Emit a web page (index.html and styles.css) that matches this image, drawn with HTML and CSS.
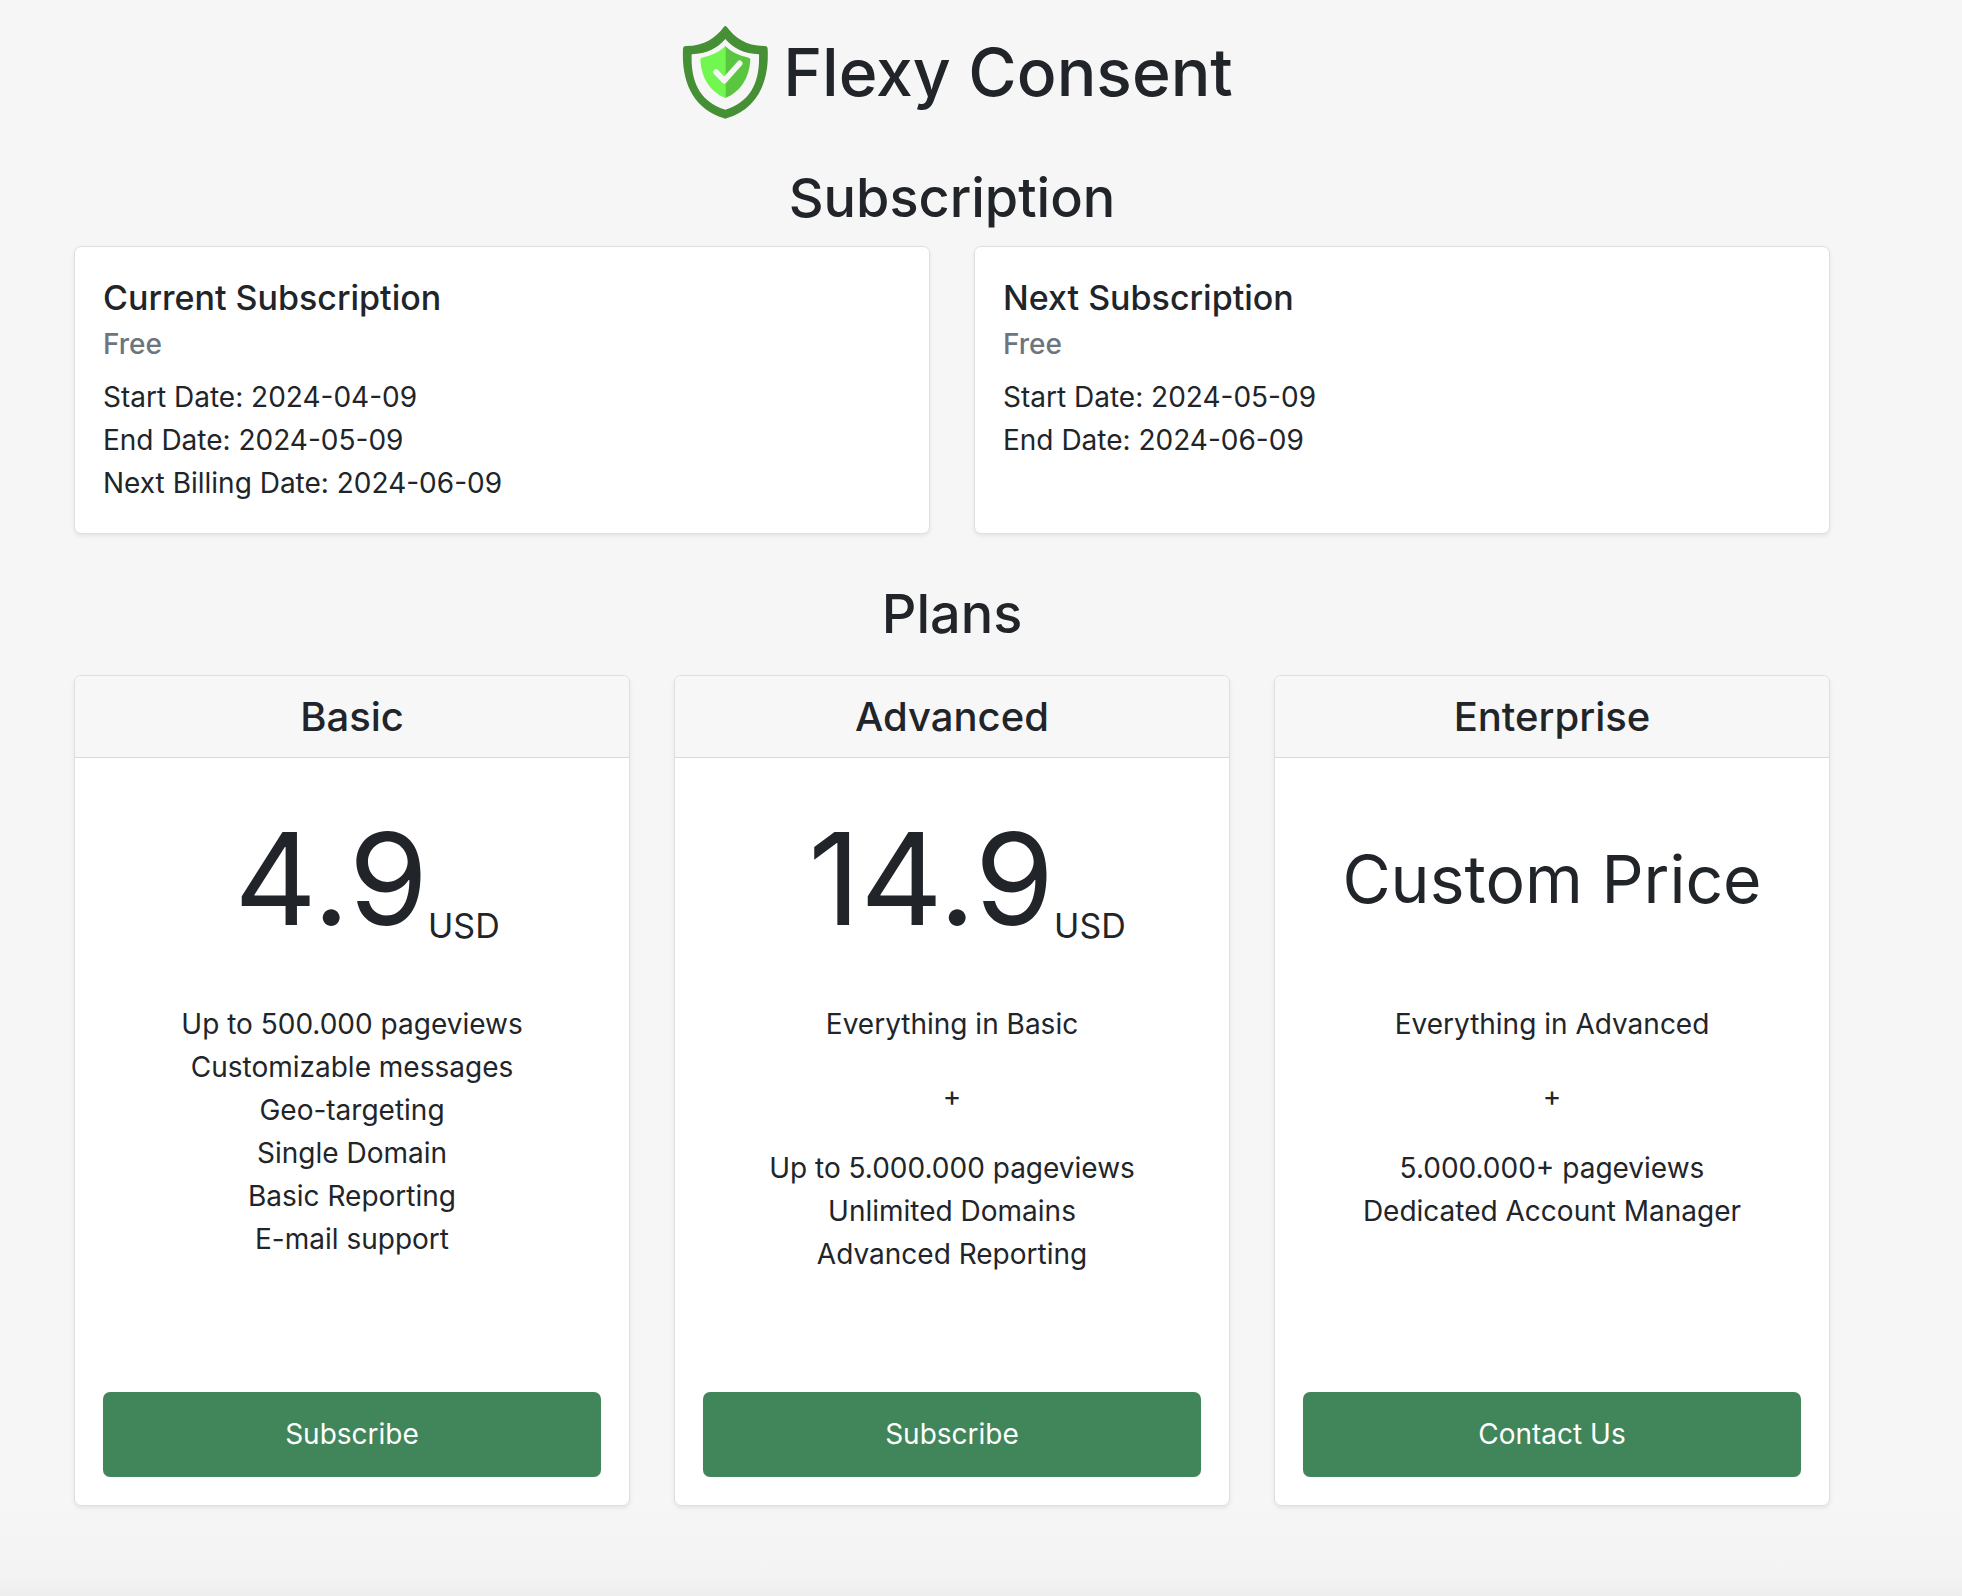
FILE: index.html
```html
<!DOCTYPE html>
<html lang="en">
<head>
  <meta charset="UTF-8" />
  <meta name="viewport" content="width=device-width, initial-scale=1.0"/>
  <title>Flexy Consent - Subscription</title>
  <link rel="stylesheet" href="styles.css">
</head>
<body>
  <main class="container">
    <header class="brand">
      <svg class="logo" viewBox="3 33 294 279" aria-hidden="true">
        <path fill="#459035" fill-rule="evenodd" d="M162 35Q166 31 170 35C194 67 228 93 284 93Q293 93 293 102C298 203 262 281 170 310Q166 312 162 310C70 281 34 203 39 102Q39 93 48 93C104 93 138 67 162 35ZM166 72C142 100 110 116 65 118C62 205 92 260 166 284C240 260 270 205 267 118C222 116 190 100 166 72Z"/>
        <path fill="#71f750" d="M166 93C148 112 122 122 96 128Q91 129 91 135C94 190 121 231 166 249Z"/>
        <path fill="#5ac53f" d="M166 93C184 112 210 122 236 128Q241 129 241 135C238 190 211 231 166 249Z"/>
        <path fill="none" stroke="#f6f6f6" stroke-width="17" stroke-linecap="round" stroke-linejoin="round" d="M138 171L163 197L209 145"/>
      </svg>
      <h1>Flexy Consent</h1>
    </header>

    <h2>Subscription</h2>
    <section class="subscriptions">
      <div class="card card-body">
        <h5>Current Subscription</h5>
        <h6>Free</h6>
        <p>Start Date: 2024-04-09<br>End Date: 2024-05-09<br>Next Billing Date: 2024-06-09</p>
      </div>
      <div class="card card-body">
        <h5>Next Subscription</h5>
        <h6>Free</h6>
        <p>Start Date: 2024-05-09<br>End Date: 2024-06-09</p>
      </div>
    </section>

    <h2 class="plans-title">Plans</h2>
    <section class="plans">
      <div class="card">
        <h4 class="card-header">Basic</h4>
        <div class="card-body">
          <div class="price">4.9<small>USD</small></div>
          <ul class="features">
            <li>Up to 500.000 pageviews</li>
            <li>Customizable messages</li>
            <li>Geo-targeting</li>
            <li>Single Domain</li>
            <li>Basic Reporting</li>
            <li>E-mail support</li>
          </ul>
          <button type="button" class="btn">Subscribe</button>
        </div>
      </div>
      <div class="card">
        <h4 class="card-header">Advanced</h4>
        <div class="card-body">
          <div class="price">14.9<small>USD</small></div>
          <ul class="features">
            <li>Everything in Basic</li>
            <li class="plus">+</li>
            <li>Up to 5.000.000 pageviews</li>
            <li>Unlimited Domains</li>
            <li>Advanced Reporting</li>
          </ul>
          <button type="button" class="btn">Subscribe</button>
        </div>
      </div>
      <div class="card">
        <h4 class="card-header">Enterprise</h4>
        <div class="card-body">
          <div class="price price-custom">Custom Price</div>
          <ul class="features">
            <li>Everything in Advanced</li>
            <li class="plus">+</li>
            <li>5.000.000+ pageviews</li>
            <li>Dedicated Account Manager</li>
          </ul>
          <button type="button" class="btn">Contact Us</button>
        </div>
      </div>
    </section>
  </main>
  <div class="page-end"></div>
</body>
</html>
```

FILE: styles.css
```css
* {
  box-sizing: border-box;
}

body {
  margin: 0;
  font-family: Inter, "Liberation Sans", sans-serif;
  font-size: 28px;
  line-height: 43px;
  color: #212529;
  background: #f6f6f6;
}

h1, h2, h4, h5, h6, p, ul {
  margin: 0;
  font-weight: 500;
}

.container {
  padding: 26px 132px 0 74px;
}

/* Logo and name */
.brand {
  display: flex;
  align-items: center;
  justify-content: center;
  gap: 14px;
  margin-bottom: 44px;
}

.logo {
  width: 98px;
  height: 93px;
}

h1 {
  font-size: 66px;
  line-height: 86px;
  padding-bottom: 2px;
}

h2 {
  font-size: 54px;
  line-height: 69px;
  text-align: center;
  margin-bottom: 14px;
}

.plans-title {
  margin: 45px 0 27px;
}

.card {
  background: #fff;
  border: 1px solid #dfdfdf;
  border-radius: 7px;
  box-shadow: 0 2px 4px rgba(0, 0, 0, 0.075);
}

.card-body {
  padding: 28px;
}

/* Subscription cards */
.subscriptions {
  display: grid;
  grid-template-columns: 1fr 1fr;
  gap: 44px;
}

h5 {
  font-size: 34px;
  line-height: 46px;
  margin-bottom: 6px;
}

h6 {
  font-size: 28px;
  line-height: 35px;
  color: #6c757d;
  margin-bottom: 14px;
}

p {
  font-weight: 400;
}

/* Plan cards */
.plans {
  display: grid;
  grid-template-columns: repeat(3, 1fr);
  gap: 44px;
  text-align: center;
}

.card-header {
  padding: 14px 28px;
  font-size: 40px;
  line-height: 53px;
  background: #f7f7f7;
  border-bottom: 1px solid #d8d8d8;
  border-radius: 6px 6px 0 0;
}

.price {
  padding-left: 30px;
  font-size: 128px;
  line-height: 186px;
  margin-bottom: 31px;
  white-space: nowrap;
}

.price small {
  font-size: 34px;
  line-height: 0;
  vertical-align: -13px;
}

.price-custom {
  padding-left: 0;
  font-size: 66px;
}

.features {
  min-height: 389px;
  padding: 0;
  font-weight: 400;
  list-style: none;
}

.plus {
  margin: 29px 0;
}

.btn {
  display: block;
  width: 100%;
  padding: 21px;
  font: inherit;
  color: #fff;
  background: #41865a;
  border: none;
  border-radius: 7px;
  cursor: pointer;
}
.btn:hover {
  background: #37724c;
}

/* Soft shade along the bottom of the page */
.page-end {
  height: 90px;
  background: linear-gradient(#f6f6f6, #f4f4f4 50%, #f2f2f2 80%, #eeeeee);
}
```
